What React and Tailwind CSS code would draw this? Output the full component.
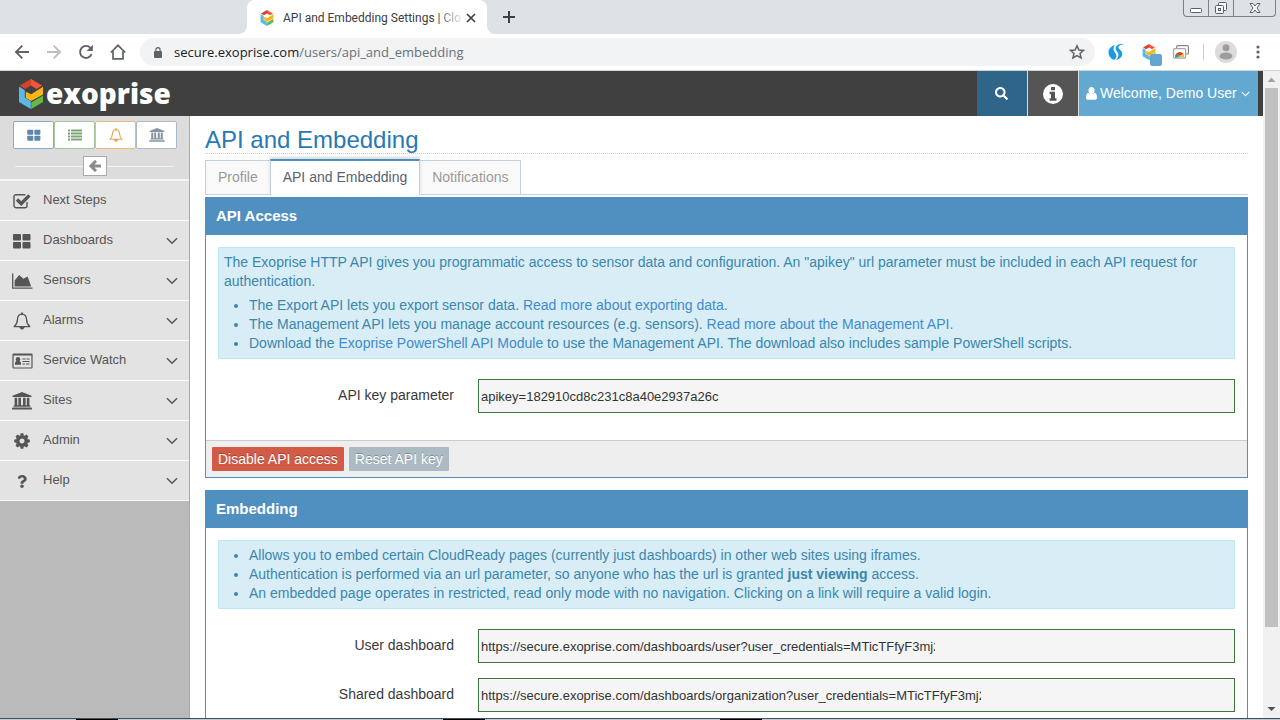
import React from "react";
import { FaSearch, FaQuestion } from "react-icons/fa";

/* ---------- icons ---------- */

function Hexagon({ className }) {
  return (
    <svg viewBox="0 0 24 30" className={className} aria-hidden="true">
      <path d="M12 0 .8 6.600 6.200 10 12 6.600 12.600 6.200 12 0z" fill="#d9412a" />
      <path d="M12 0 23.200 6.600 17.600 10 12 6.600z" fill="#f0573a" />
      <path d="M0 7.600 5.800 11.200V18.600L11.800 22.200V30L0 23z" fill="#5ab8ea" />
      <path d="M24 7.800V15.400L12.200 22 6.800 18.800V12.800L12.200 15.200z" fill="#fdb515" />
      <path d="M24 16.600V23L12.200 30V23.400z" fill="#66b845" />
    </svg>
  );
}

function InfoCircle({ className }) {
  return (
    <svg viewBox="0 0 20 20" className={className} aria-hidden="true">
      <circle cx="10" cy="10" r="10" fill="currentColor" />
      <path d="M8 3H12V6.200H8zM6.600 7.800H12V14.200H13.500V16.700H6.600V14.200H8V10.300H6.600z" fill="#555" />
    </svg>
  );
}

function Grid({ className }) {
  return (
    <svg viewBox="0 0 18 16" className={className} fill="currentColor" aria-hidden="true">
      <rect x="0" y="1" width="8" height="6.500" rx="1" />
      <rect x="9.500" y="1" width="8" height="6.500" rx="1" />
      <rect x="0" y="9" width="8" height="6.500" rx="1" />
      <rect x="9.500" y="9" width="8" height="6.500" rx="1" />
    </svg>
  );
}

function List({ className }) {
  return (
    <svg viewBox="0 0 14 12" className={className} fill="currentColor" aria-hidden="true">
      {[0.5, 3.5, 6.5, 9.5].map((y) => (
        <g key={y}>
          <rect x="0" y={y} width="2" height="2" />
          <rect x="3" y={y} width="11" height="2" />
        </g>
      ))}
    </svg>
  );
}

function Bell({ className }) {
  return (
    <svg viewBox="0 0 18 18" className={className} fill="none" stroke="currentColor" strokeWidth="1.300" strokeLinejoin="round" aria-hidden="true">
      <path d="M9 2.200C6 2.400 4.600 4.600 4.500 7.200 4.400 10.400 3.400 12.600 1.200 14.600H16.800C14.600 12.600 13.600 10.400 13.500 7.200 13.400 4.600 12 2.400 9 2.200z" />
      <path d="M9 .4V2.200" strokeWidth="2" />
      <path d="M6.800 15C7 18 11 18 11.200 15z" fill="currentColor" strokeWidth=".6" />
    </svg>
  );
}

function Bank({ className }) {
  return (
    <svg viewBox="0 0 20 18" className={className} fill="currentColor" aria-hidden="true">
      <path d="M10 0 19.500 3.800V5H.5V3.800z" />
      <path d="M2.600 5.800H5.200V13.200H6.400V5.800H9V13.200H11V5.800H13.600V13.200H14.800V5.800H17.400V13.200C18 13.200 18.400 13.600 18.400 14.200V14.800H1.600V14.200C1.600 13.600 2 13.200 2.600 13.200z" />
      <path d="M.9 15.600H19.100C19.600 15.600 20 16 20 16.500V17.600H0V16.500C0 16 .4 15.600 .9 15.600z" />
    </svg>
  );
}

function CheckSquare({ className }) {
  return (
    <svg viewBox="0 0 18 18" className={className} fill="none" stroke="currentColor" aria-hidden="true">
      <path d="M14 10V13.700A2 2 0 0 1 12 15.700H3A2 2 0 0 1 1 13.700V4.700A2 2 0 0 1 3 2.700H12.400" strokeWidth="1.400" />
      <path d="M4 7.600 8.200 11.600 16.400 3.400" strokeWidth="3.400" />
    </svg>
  );
}

function AreaChart({ className }) {
  return (
    <svg viewBox="0 0 21 16" className={className} aria-hidden="true">
      <path d="M.7.500V15.200H20.500" fill="none" stroke="currentColor" strokeWidth="1.300" />
      <path d="M2.600 13.400V7.600L7.200 2 11.400 5.800 15.600 3.400 19.200 13.400z" fill="currentColor" />
    </svg>
  );
}

function IdCard({ className }) {
  return (
    <svg viewBox="0 0 21 16" className={className} fill="currentColor" aria-hidden="true">
      <path fillRule="evenodd" d="M1.600.500H19.400A1.200 1.200 0 0 1 20.600 1.700V14.300A1.200 1.200 0 0 1 19.400 15.500H1.600A1.200 1.200 0 0 1 .4 14.300V1.700A1.200 1.200 0 0 1 1.600.500zM1.600 2.600V14.400H19.400V2.600z" />
      <circle cx="6" cy="6.300" r="2.200" />
      <path d="M3 11.800V10.200C3 8.600 4.200 8 6 8S9 8.600 9 10.200V11.800z" />
      <path d="M10.500 5.500H13.500V6.500H10.500zM14.500 5.500H17.600V6.500H14.500zM10.500 8H17.600V9H10.500zM10.500 10.600H13V11.600H10.500zM14 10.600H17.600V11.600H14z" />
    </svg>
  );
}

function Cog({ className }) {
  return (
    <svg viewBox="-8 -8 16 16" className={className} aria-hidden="true">
      <circle r="4.300" fill="none" stroke="currentColor" strokeWidth="3.600" />
      {[0, 45, 90, 135, 180, 225, 270, 315].map((a) => (
        <path key={a} d="M-1.900-5.500-1.300-7.800H1.300L1.900-5.500z" fill="currentColor" transform={`rotate(${a})`} />
      ))}
    </svg>
  );
}

function Help({ className }) {
  return <FaQuestion className={className} />;
}

function Chevron({ className }) {
  return (
    <svg viewBox="0 0 12 8" className={className} fill="none" stroke="currentColor" strokeWidth="1.500" aria-hidden="true">
      <path d="M1 1.200 6 6.200 11 1.200" />
    </svg>
  );
}

function User({ className }) {
  return (
    <svg viewBox="0 0 11 13" className={className} fill="currentColor" aria-hidden="true">
      <ellipse cx="5.500" cy="3.600" rx="3" ry="3.500" />
      <path d="M2.400 5.800C3.200 7.600 7.800 7.600 8.600 5.800 10.400 6.200 11 8.200 11 10.400 11 12 10.200 12.800 9 12.800H2C.8 12.800 0 12 0 10.400 0 8.200.6 6.200 2.400 5.800z" />
    </svg>
  );
}

/* ---------- browser window ---------- */

function TabStrip() {
  return (
    <div className="flex h-[34px] shrink-0 items-stretch justify-between bg-[#dee1e6] pl-[239px]">
      <div className="flex">
        <div className="flex w-2 items-end bg-white">
          <div className="h-full w-2 rounded-br-lg bg-[#dee1e6]" />
        </div>
        <div className="-mb-px flex w-[240px] items-center rounded-t-lg bg-white pr-2 pl-3">
          <Hexagon className="h-4 w-4" />
          <div className="ml-2 w-[176px] font-[Roboto,'Noto_Sans',sans-serif] text-[12px] whitespace-nowrap text-[#3c4043]">
            API and Embedding Settings |{" "}
            <span className="bg-linear-to-r from-[#6b6f73] to-[#e4e5e6] bg-clip-text text-transparent">Clo</span>
          </div>
          <button aria-label="Close tab" className="ml-1 flex h-4 w-4 items-center justify-center text-[#3c4043]">
            <svg viewBox="0 0 10 10" className="h-[10px] w-[10px]" stroke="currentColor" strokeWidth="1.700">
              <path d="M1 1 9 9M9 1 1 9" />
            </svg>
          </button>
        </div>
        <div className="flex w-2 items-end bg-white">
          <div className="h-full w-2 rounded-bl-lg bg-[#dee1e6]" />
        </div>
        <button aria-label="New tab" className="flex w-[28px] items-center justify-center text-[#3c4043]">
          <svg viewBox="0 0 12 12" className="h-3 w-3" stroke="currentColor" strokeWidth="2">
            <path d="M6 0V12M0 6H12" />
          </svg>
        </button>
      </div>
      <div className="mr-1 flex h-[17px] divide-x divide-[#7c8188] rounded-b border border-t-0 border-[#7c8188] text-[#5a5f66]">
        <button aria-label="Minimize" className="flex w-[25px] items-center justify-center">
          <svg viewBox="0 0 12 12" className="h-3 w-3" fill="#fff" stroke="currentColor">
            <rect x=".5" y="6.500" width="11" height="4" rx="1" />
          </svg>
        </button>
        <button aria-label="Restore" className="flex w-[25px] items-center justify-center">
          <svg viewBox="0 0 14 14" className="h-[14px] w-[14px]" fill="#f4f5f7" stroke="currentColor">
            <rect x="4.500" y="1.500" width="8" height="8" rx="1" />
            <rect x="1.500" y="4.500" width="8" height="8" rx="1" />
            <rect x="4.500" y="7.500" width="2" height="2" />
          </svg>
        </button>
        <button aria-label="Close" className="flex w-[41px] items-center justify-center">
          <svg viewBox="0 0 12 12" className="h-3 w-3" fill="#fff" stroke="currentColor">
            <path d="M1 1.500H4L6 4 8 1.500H11L8 6 11 10.500H8L6 8 4 10.500H1L4 6z" />
          </svg>
        </button>
      </div>
    </div>
  );
}

function Toolbar() {
  return (
    <div className="flex h-[37px] shrink-0 items-center border-b border-[#d0d3d7] bg-white pr-5 pl-[14px] text-[#5f6368]">
      <div className="flex gap-4">
        <button aria-label="Back">
          <svg viewBox="0 0 16 16" className="h-4 w-4" fill="none" stroke="currentColor" strokeWidth="1.900">
            <path d="M15 8H2.500M8.300 1.700 2 8 8.300 14.300" />
          </svg>
        </button>
        <button aria-label="Forward" className="text-[#bbbdc0]">
          <svg viewBox="0 0 16 16" className="h-4 w-4" fill="none" stroke="currentColor" strokeWidth="1.900">
            <path d="M1 8H13.500M7.700 1.700 14 8 7.700 14.300" />
          </svg>
        </button>
        <button aria-label="Reload">
          <svg viewBox="0 0 16 16" className="h-4 w-4" fill="none" stroke="currentColor" strokeWidth="1.900">
            <path d="M13.600 10.200A6 6 0 1 1 12.600 4" />
            <path d="M14.800.8V7H8.600z" fill="currentColor" stroke="none" />
          </svg>
        </button>
        <button aria-label="Home">
          <svg viewBox="0 0 16 16" className="h-4 w-4" fill="none" stroke="currentColor" strokeWidth="1.700">
            <path d="M.8 8.500 8 1.300 15.200 8.500M3 7V14.800H13V7" />
          </svg>
        </button>
      </div>
      <div className="ml-[14px] flex h-7 flex-1 items-center rounded-full bg-[#f1f3f4] pr-[10px] pl-[14px]">
        <svg viewBox="0 0 8 11" className="h-[11px] w-2" aria-hidden="true">
          <rect y="4" width="8" height="7" rx="1" fill="currentColor" />
          <path d="M1.900 4.500V2.700A2.100 2.100 0 0 1 6.100 2.700V4.500" fill="none" stroke="currentColor" strokeWidth="1.200" />
        </svg>
        <div className="ml-3 flex-1 pt-px font-['Open_Sans','Noto_Sans',sans-serif] text-[13px] text-[#6b7075]">
          <span className="text-[#202124]">secure.exoprise.com</span>/users/api_and_embedding
        </div>
        <button aria-label="Bookmark this page">
          <svg viewBox="0 0 16 16" className="h-4 w-4" fill="none" stroke="currentColor" strokeWidth="1.500">
            <path d="M8 1.800 9.900 6 14.500 6.400 11 9.400 12.100 13.900 8 11.500 3.900 13.900 5 9.400 1.500 6.400 6.100 6z" />
          </svg>
        </button>
      </div>
      <button aria-label="Extension S" className="ml-[13px]">
        <svg viewBox="0 0 16 16" className="h-4 w-4" fill="#1b9ae4">
          <path d="M16 .3C11.500-.4 8 .6 7.600 4 7.500 7 11 8 10.400 11.800 10.200 13.400 9 15 7.800 15.800 12 15.400 14.600 12.400 14.200 9 13.800 6 10.200 5 10.400 3 10.600 1.300 13 .9 16 .3z" />
          <path d="M7.400.900C3 1.800 0 5 .6 9.200 1 12.600 3.600 15.400 6.400 15.800 8.400 14.200 9 12 7.800 9.800 6.600 7.800 5.200 6.400 5.600 4 5.800 2.600 6.400 1.600 7.400.9z" />
        </svg>
      </button>
      <button aria-label="Exoprise extension" className="relative ml-[17px]">
        <Hexagon className="h-4 w-4" />
        <span className="absolute top-[10px] left-[9px] h-3 w-3 rounded-xs bg-[#62a5d2]" />
      </button>
      <button aria-label="Media extension" className="ml-4">
        <svg viewBox="0 0 16 14" className="h-[14px] w-4" fill="none">
          <rect x="3.600" y=".6" width="11.800" height="8.400" rx="1" stroke="#85898d" strokeWidth="1.200" />
          <rect x=".6" y="3.600" width="12" height="9.600" rx="1" fill="#fff" stroke="#a4a7aa" strokeWidth="1.200" />
          <path d="M2 12.600A4.700 4.700 0 0 1 3.300 8.600L6.700 11V12.600z" fill="#2fa64c" />
          <path d="M3.200 8.700A4.700 4.700 0 0 1 10.600 9L6.700 11z" fill="#e33b2e" />
          <path d="M10.500 8.900A4.700 4.700 0 0 1 11.400 12.600H6.700V11z" fill="#fbc116" />
          <path d="M4.900 12.600A1.850 1.850 0 0 1 8.500 12.600z" fill="#3f7fe8" stroke="#fff" strokeWidth=".4" />
        </svg>
      </button>
      <div className="ml-[14px] h-4 w-px bg-[#c9cccf]" />
      <button aria-label="Profile" className="ml-[11px] flex">
        <svg viewBox="0 0 22 22" className="h-[22px] w-[22px]">
          <circle cx="11" cy="11" r="11" fill="#dcdcdc" />
          <circle cx="11" cy="6.800" r="3.500" fill="#9d9d9d" />
          <ellipse cx="11" cy="15" rx="6.500" ry="3.600" fill="#9d9d9d" />
        </svg>
      </button>
      <button aria-label="Browser menu" className="ml-[19px]">
        <svg viewBox="0 0 4 14" className="h-[14px] w-1" fill="currentColor">
          <circle cx="2" cy="2" r="1.600" />
          <circle cx="2" cy="7" r="1.600" />
          <circle cx="2" cy="12" r="1.600" />
        </svg>
      </button>
    </div>
  );
}

function ScrollBar() {
  return (
    <div className="flex w-[17px] shrink-0 flex-col bg-[#f1f1f1]" aria-hidden="true">
      <svg viewBox="0 0 17 17" className="h-[17px] w-[17px]" fill="#a3a3a3">
        <path d="M8.500 6.500 12.500 11H4.500z" />
      </svg>
      <div className="flex flex-1 flex-col px-[2px]">
        <div className="h-[88%] bg-[#c1c1c1]" />
      </div>
      <svg viewBox="0 0 17 17" className="h-[17px] w-[17px]" fill="#505050">
        <path d="M8.500 10 12.500 6H4.500z" />
      </svg>
    </div>
  );
}

function Taskbar() {
  return (
    <div className="flex h-[2px] shrink-0 border-t border-[#43505a] bg-[#b9cbd6] pl-[62px]" aria-hidden="true">
      <div className="ml-[14px] h-px w-[42px] bg-black" />
      <div className="ml-[325px] h-px w-[42px] bg-black" />
      <div className="ml-[235px] h-px w-[42px] bg-black" />
    </div>
  );
}

/* ---------- application ---------- */

function NavBar() {
  return (
    <header className="flex h-[45px] shrink-0 items-stretch justify-between bg-[#404040] pr-[5px] pl-[19px]">
      <a href="#" className="flex items-center text-white">
        <Hexagon className="h-[30px] w-6" />
        <span className="ml-[3px] pb-[2px] font-['Open_Sans','Noto_Sans',sans-serif] text-[28px] leading-[30px] font-extrabold">exoprise</span>
      </a>
      <div className="flex items-stretch divide-x divide-[#ddd] text-white">
        <button aria-label="Search" className="flex w-[51px] items-center justify-center bg-[#2e6589] pr-px">
          <FaSearch className="h-[13px] w-[13px]" />
        </button>
        <button aria-label="Information" className="flex w-[51px] items-center justify-center bg-[#555] pr-px">
          <InfoCircle className="h-5 w-5" />
        </button>
        <button className="flex w-[179px] items-center bg-[#62a8d1] pl-[7px] text-[14px]">
          <User className="h-[13px] w-[11px]" />
          <span className="ml-[3px]">Welcome, Demo User</span>
          <Chevron className="ml-1 h-[6px] w-[9px]" />
        </button>
      </div>
    </header>
  );
}

const menu = [
  { label: "Next Steps", Icon: CheckSquare, size: "h-[18px] w-[18px]", leaf: true },
  { label: "Dashboards", Icon: Grid, size: "h-4 w-[18px]" },
  { label: "Sensors", Icon: AreaChart, size: "h-4 w-[21px]" },
  { label: "Alarms", Icon: Bell, size: "h-[18px] w-[18px]" },
  { label: "Service Watch", Icon: IdCard, size: "h-4 w-[21px]" },
  { label: "Sites", Icon: Bank, size: "h-[18px] w-5" },
  { label: "Admin", Icon: Cog, size: "h-4 w-4" },
  { label: "Help", Icon: Help, size: "h-[13px] w-3" },
];

function Sidebar() {
  return (
    <aside className="w-[190px] shrink-0 border-r border-[#aaa] bg-[#bababa]">
      <div className="border-b-2 border-[#f4f4f4] bg-[#dcdcdc] pt-[5px]">
        <div className="flex pr-3 pl-[13px]">
          <button aria-label="Dashboards" className="flex h-7 flex-1 items-center justify-center rounded-xs border border-[#8aaccb] bg-white text-[#5f87ac]">
            <Grid className="h-3 w-[14px]" />
          </button>
          <button aria-label="Sensors" className="flex h-7 flex-1 items-center justify-center rounded-xs border border-[#a3c799] bg-white text-[#7ba574]">
            <List className="h-3 w-[14px]" />
          </button>
          <button aria-label="Alarms" className="flex h-7 flex-1 items-center justify-center rounded-xs border border-[#efb872] bg-white text-[#e5a04f]">
            <Bell className="h-[14px] w-[14px]" />
          </button>
          <button aria-label="Sites" className="flex h-7 flex-1 items-center justify-center rounded-xs border border-[#a9bbc8] bg-white text-[#8494a0]">
            <Bank className="h-[14px] w-4" />
          </button>
        </div>
        <div className="flex items-center px-[15px] pt-[7px] pb-[3px]">
          <div className="h-px flex-1 bg-[#f3f3f3]" />
          <button aria-label="Collapse sidebar" className="flex h-5 w-6 items-center justify-center border border-[#aaa] bg-white text-[#8c8c8c]">
            <svg viewBox="0 0 12 12" className="h-3 w-3" fill="none" stroke="currentColor" strokeWidth="2.900">
              <path d="M12 6H2.500M7 .9 1.900 6 7 11.100" />
            </svg>
          </button>
          <div className="h-px flex-1 bg-[#f3f3f3]" />
        </div>
      </div>
      <nav>
        <ul>
          {menu.map(({ label, Icon, size, leaf }) => (
            <li key={label} className="border-b border-[#fafafa] bg-[#e3e3e3]">
              <a href="#" className="flex h-[39px] items-center px-[11px] text-[13px] text-[#555]">
                <span className="flex w-[22px] items-center justify-center pt-px">
                  <Icon className={`${size} shrink-0`} />
                </span>
                <span className="ml-[10px] flex-1 pb-[2px]">{label}</span>
                {!leaf && <Chevron className="h-2 w-3" />}
              </a>
            </li>
          ))}
        </ul>
      </nav>
    </aside>
  );
}

function Tabs() {
  return (
    <div className="mt-[5px] flex items-end border-b border-[#c5d0dc] text-[14px] leading-[19px] text-[#999]">
      <a href="#" className="-mr-px h-[34px] border border-b-0 border-[#c5d0dc] bg-[#f9f9f9] px-3 pt-[7px]">Profile</a>
      <a href="#" className="relative -mb-px h-9 border-x border-t-2 border-x-[#c5d0dc] border-t-[#4c8fbd] bg-white px-3 pt-[7px] text-[#576373] shadow-[0_-2px_3px_0_rgba(0,0,0,0.15)]">API and Embedding</a>
      <a href="#" className="-ml-px h-[34px] border border-b-0 border-[#c5d0dc] bg-[#f9f9f9] px-3 pt-[7px]">Notifications</a>
    </div>
  );
}

function Panel({ title, footer, children }) {
  return (
    <section className="border border-[#5090c1]">
      <h2 className="-mx-px -mt-px flex h-[38px] items-center bg-[#5090c1] px-[11px] text-[15px] font-bold text-white">{title}</h2>
      <div className="p-3">{children}</div>
      {footer && <div className="flex gap-[5px] border-t border-[#ccc] bg-[#eee] p-[6px]">{footer}</div>}
    </section>
  );
}

function Info({ children }) {
  return (
    <div className="border border-[#bce8f1] bg-[#d9edf7] p-[5px] text-[14px] leading-[19px] text-[#3a87ad]">{children}</div>
  );
}

function Field({ id, label, value, width }) {
  return (
    <div className="flex items-start">
      <label htmlFor={id} className="w-[236px] shrink-0 pt-[7px] text-right text-[14px] leading-[19px] text-[#393939]">{label}</label>
      <div className="ml-6 flex h-[34px] flex-1 border border-[#3c763d] bg-[#f5f5f5] pl-[2px]">
        <input id={id} type="text" readOnly defaultValue={value} className={`${width} max-w-full bg-transparent pt-[2px] text-[13px] text-[#333] outline-none`} />
      </div>
    </div>
  );
}

const link = "text-[#428bca]";

export default function App() {
  return (
    <div className="flex h-screen flex-col overflow-hidden bg-white font-['Liberation_Sans',Arial,sans-serif]">
      <TabStrip />
      <Toolbar />
      <div className="flex min-h-0 flex-1">
        <div className="flex min-w-0 flex-1 flex-col overflow-hidden">
          <NavBar />
          <div className="flex min-h-0 flex-1">
            <Sidebar />
            <main className="min-w-0 flex-1 overflow-hidden px-[15px] pt-[11px]">
              <h1 className="border-b border-dotted border-[#ccc] text-[24px] leading-[26px] text-[#2679b5]">API and Embedding</h1>
              <Tabs />
              <div className="mt-[2px] flex flex-col gap-3">
                <Panel
                  title="API Access"
                  footer={
                    <>
                      <button className="h-6 rounded-[1px] bg-[#d15b47] px-[6px] text-[14px] text-white [text-shadow:0_-1px_0_rgba(0,0,0,0.25)]">Disable API access</button>
                      <button className="h-6 rounded-[1px] bg-[#abbac3] px-[6px] text-[14px] text-white [text-shadow:0_-1px_0_rgba(0,0,0,0.25)]">Reset API key</button>
                    </>
                  }
                >
                  <Info>
                    <p>
                      The Exoprise HTTP API gives you programmatic access to sensor data and configuration. An "apikey" url parameter must be included in each API request for authentication.
                    </p>
                    <ul className="mt-[5px] list-disc pl-[25px]">
                      <li>The Export API lets you export sensor data. <a href="#" className={link}>Read more about exporting data.</a></li>
                      <li>The Management API lets you manage account resources (e.g. sensors). <a href="#" className={link}>Read more about the Management API.</a></li>
                      <li>Download the <a href="#" className={link}>Exoprise PowerShell API Module</a> to use the Management API. The download also includes sample PowerShell scripts.</li>
                    </ul>
                  </Info>
                  <div className="mt-5 mb-[15px]">
                    <Field id="apikey" label="API key parameter" value="apikey=182910cd8c231c8a40e2937a26c" width="w-full" />
                  </div>
                </Panel>
                <Panel title="Embedding">
                  <Info>
                    <ul className="list-disc pl-[25px]">
                      <li>Allows you to embed certain CloudReady pages (currently just dashboards) in other web sites using iframes.</li>
                      <li>Authentication is performed via an url parameter, so anyone who has the url is granted <b>just viewing</b> access.</li>
                      <li>An embedded page operates in restricted, read only mode with no navigation. Clicking on a link will require a valid login.</li>
                    </ul>
                  </Info>
                  <div className="mt-5 flex flex-col gap-[15px]">
                    <Field id="user-url" label="User dashboard" value="https://secure.exoprise.com/dashboards/user?user_credentials=MTicTFfyF3mj2" width="w-[454px]" />
                    <Field id="shared-url" label="Shared dashboard" value="https://secure.exoprise.com/dashboards/organization?user_credentials=MTicTFfyF3mj2" width="w-[500px]" />
                  </div>
                </Panel>
              </div>
            </main>
          </div>
        </div>
        <ScrollBar />
      </div>
      <Taskbar />
    </div>
  );
}
